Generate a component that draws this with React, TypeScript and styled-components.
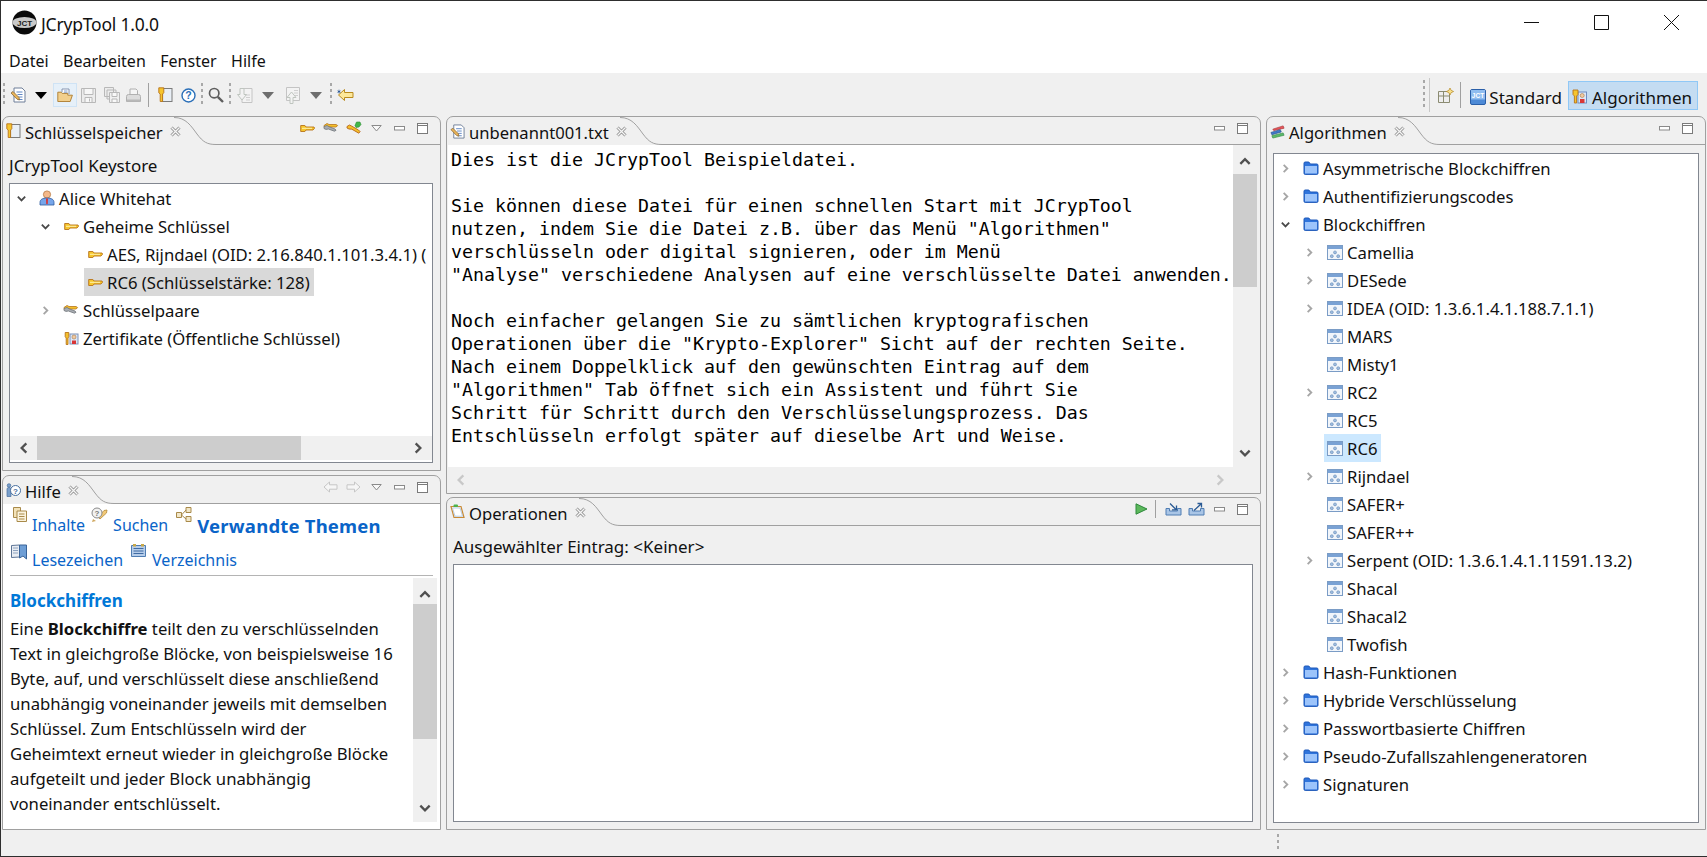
import React from "react";
import styled, { createGlobalStyle } from "styled-components";

const UI_FONT = `"Noto Sans", "Open Sans", sans-serif`;
const BORDER = "#a0a0a0";
const BG = "#f0f0f0";

const GlobalStyle = createGlobalStyle`
  html, body {
    margin: 0;
    padding: 0;
    background: ${BG};
  }
  * {
    box-sizing: border-box;
  }
`;

const Win = styled.div`
  width: 1707px;
  height: 857px;
  overflow: hidden;
  display: flex;
  flex-direction: column;
  background: ${BG};
  border-top: 1px solid #2e2e2e;
  border-left: 1px solid #2e2e2e;
  border-bottom: 1px solid #2e2e2e;
  font-family: ${UI_FONT};
  font-size: 17px;
  color: #111;
`;

const TitleBar = styled.div`
  height: 47px;
  flex: none;
  background: #fff;
  display: flex;
  align-items: center;
  padding: 0 0 4px 11px;
`;

const TitleText = styled.span`
  margin-left: 4px;
  font-size: 17.5px;
  letter-spacing: -0.2px;
  position: relative;
  top: 1px;
`;

const WinButtons = styled.div`
  margin-left: auto;
  display: flex;
  align-items: center;
  margin-right: 28px;
  gap: 55px;
  svg {
    display: block;
  }
`;

const MenuBar = styled.div`
  height: 25px;
  flex: none;
  background: #fff;
  display: flex;
  align-items: center;
  padding-left: 8px;
  gap: 14.5px;
  font-size: 16px;
`;

const Toolbar = styled.div`
  height: 43px;
  flex: none;
  display: flex;
  align-items: center;
  padding-top: 1px;
`;

const ToolSlot = styled.div<{ $w: number }>`
  flex: none;
  width: ${(p) => p.$w}px;
  height: 24px;
  display: flex;
  align-items: center;
  justify-content: center;
  svg {
    display: block;
    flex: none;
  }
`;

const ActiveSlot = styled(ToolSlot)`
  background: #e6f0f9;
  border: 1px solid #cfe3f5;
`;

const Handle = styled.div<{ $h?: number }>`
  flex: none;
  width: 2px;
  height: ${(p) => p.$h ?? 24}px;
  background-image: linear-gradient(#a8a8a8 50%, transparent 50%);
  background-size: 2px 6px;
`;

const VLine = styled.div<{ $h?: number }>`
  flex: none;
  width: 1px;
  height: ${(p) => p.$h ?? 24}px;
  background: #a0a0a0;
`;

const PerspectiveBar = styled.div`
  margin-left: auto;
  display: flex;
  align-items: center;
  height: 100%;
  padding-right: 9px;
  svg {
    display: block;
    flex: none;
  }
`;

const PerspectiveDivider = styled.div`
  width: 1px;
  height: 34px;
  background: #c8c8c8;
  margin: 0 8px 0 4px;
`;

const PerspectiveBtn = styled.div<{ $active?: boolean }>`
  display: flex;
  align-items: center;
  gap: ${(p) => (p.$active ? 5 : 3)}px;
  height: 29px;
  padding: 4px 5px 0 3px;
  font-size: 17px;
  border: 1px solid ${(p) => (p.$active ? "#90c8f6" : "transparent")};
  background: ${(p) => (p.$active ? "#c4dcf2" : "transparent")};
`;

const Workbench = styled.div`
  flex: none;
  height: 714px;
  display: flex;
  padding-left: 1px;
  gap: 5px;
`;

const Column = styled.div<{ $w: number; $gap: number }>`
  flex: none;
  width: ${(p) => p.$w}px;
  display: flex;
  flex-direction: column;
  gap: ${(p) => p.$gap}px;
`;

const PanelBox = styled.div<{ $h?: number }>`
  height: ${(p) => (p.$h ? `${p.$h}px` : "100%")};
  flex: none;
  display: flex;
  flex-direction: column;
  border: 1px solid ${BORDER};
  border-radius: 7px 7px 0 0;
  overflow: hidden;
`;

const PanelHead = styled.div`
  flex: none;
  height: 28px;
  display: flex;
`;

const Tab = styled.div`
  display: flex;
  align-items: center;
  height: 28px;
  padding-left: 3px;
  font-size: 16.6px;
  flex: none;
  span {
    margin: 3px 7px 0 4px;
    white-space: nowrap;
  }
  svg {
    display: block;
    flex: none;
  }
`;

const TabCurve = styled.svg`
  flex: none;
  margin-left: -7px;
  display: block;
`;

const HeadRest = styled.div`
  flex: 1;
  min-width: 0;
  border-bottom: 1px solid ${BORDER};
  display: flex;
  justify-content: flex-end;
  align-items: flex-start;
  padding: 1px 6px 0 0;
`;

const HeadTool = styled.div<{ $w?: number }>`
  flex: none;
  width: ${(p) => p.$w ?? 23}px;
  height: 20px;
  display: flex;
  align-items: center;
  justify-content: center;
  svg {
    display: block;
    flex: none;
  }
`;

const PanelBody = styled.div<{ $white?: boolean; $pad?: string }>`
  flex: 1;
  min-height: 0;
  display: flex;
  flex-direction: column;
  background: ${(p) => (p.$white ? "#fff" : BG)};
  padding: ${(p) => p.$pad ?? "0"};
`;

const Caption = styled.div`
  flex: none;
  height: 38px;
  padding-top: 3px;
  display: flex;
  align-items: center;
  font-size: 17px;
`;

const TreeFrame = styled.div`
  flex: 1;
  min-height: 0;
  border: 1px solid #828790;
  background: #fff;
  display: flex;
  flex-direction: column;
  overflow: hidden;
`;

const TreeList = styled.div`
  flex: 1;
  min-height: 0;
  overflow: hidden;
`;

const TreeRow = styled.div<{ $level: number }>`
  height: 28px;
  display: flex;
  align-items: center;
  padding-left: ${(p) => 3 + p.$level * 24}px;
  font-size: 16.7px;
  white-space: nowrap;
  svg {
    flex: none;
    display: block;
  }
`;

const Twisty = styled.div`
  flex: none;
  width: 17px;
  height: 28px;
  display: flex;
  align-items: center;
  justify-content: center;
`;

const TreeEntry = styled.div<{ $sel?: string }>`
  display: flex;
  align-items: center;
  height: 28px;
  margin-left: 6px;
  padding: 0 4px 0 3px;
  background: ${(p) => p.$sel ?? "transparent"};
`;

const TreeIcon = styled.div`
  flex: none;
  width: 16px;
  margin-right: 4px;
  display: flex;
  justify-content: center;
`;

const HScroll = styled.div<{ $h?: number; $right?: number }>`
  flex: none;
  height: ${(p) => p.$h ?? 24}px;
  background: ${BG};
  display: flex;
  align-items: center;
  justify-content: space-between;
  padding: 0 ${(p) => p.$right ?? 7}px 0 7px;
  position: relative;
  svg {
    display: block;
  }
`;

const HThumb = styled.div`
  position: absolute;
  left: 27px;
  top: 0;
  bottom: 0;
  width: 264px;
  background: #cdcdcd;
`;

const VScroll = styled.div`
  flex: none;
  width: 24px;
  background: ${BG};
  display: flex;
  flex-direction: column;
  justify-content: space-between;
  align-items: center;
  position: relative;
  padding: 9px 0 7px;
  svg {
    display: block;
  }
`;

const VThumb = styled.div<{ $top: number; $h: number }>`
  position: absolute;
  left: 0;
  right: 0;
  top: ${(p) => p.$top}px;
  height: ${(p) => p.$h}px;
  background: #cdcdcd;
`;

const HelpNav = styled.div`
  flex: none;
  height: 72px;
  margin: 0 7px;
  border-bottom: 1px solid #b4b4b4;
  color: #0a64c8;
`;

const NavRow = styled.div<{ $h: number }>`
  height: ${(p) => p.$h}px;
  display: flex;
  align-items: flex-start;
`;

const NavItem = styled.div<{ $pad: number; $gap: number }>`
  display: flex;
  align-items: flex-start;
  padding-left: ${(p) => p.$pad}px;
  gap: ${(p) => p.$gap}px;
  font-size: 16px;
  svg {
    display: block;
    margin-top: 3px;
  }
`;

const NavText = styled.span<{ $top: number }>`
  margin-top: ${(p) => p.$top}px;
`;

const NavStrong = styled.span`
  margin-top: 9px;
  font-size: 18.5px;
  font-weight: 700;
  letter-spacing: 0.2px;
`;

const HelpContent = styled.div`
  flex: 1;
  min-height: 0;
  display: flex;
  margin-top: 2px;
`;

const HelpText = styled.div`
  flex: 1;
  min-width: 0;
  padding: 10px 0 0 7px;
  font-size: 16.7px;
  line-height: 25px;
`;

const HelpHeading = styled.div`
  color: #0078d7;
  font-weight: 700;
  font-size: 17px;
  height: 28px;
`;

const HelpLine = styled.div`
  white-space: nowrap;
`;

const HelpFoot = styled.div`
  flex: none;
  height: 7px;
`;

const HelpScroll = styled(VScroll)`
  margin-right: 3px;
`;

const EditorArea = styled.div`
  flex: 1;
  min-height: 0;
  display: flex;
  padding-right: 3px;
  background: ${BG};
`;

const EditorText = styled.pre`
  flex: 1;
  min-width: 0;
  margin: 0 0 0 1px;
  background: #fff;
  padding: 3px 0 0 3px;
  font-family: "DejaVu Sans Mono", "Liberation Mono", monospace;
  font-size: 18.27px;
  line-height: 23px;
  color: #000;
  overflow: hidden;
`;

const OpsBox = styled.div`
  flex: 1;
  min-height: 0;
  border: 1px solid #828790;
  background: #fff;
`;

const StatusBar = styled.div`
  flex: 1;
  min-height: 0;
  display: flex;
  align-items: center;
  padding-left: 1276px;
`;

const Gap = styled.div<{ $h: number }>`
  flex: none;
  height: ${(p) => p.$h}px;
`;

// ---- icons ----

const Chevron = ({ dir, color = "#505050", size = 14 }: { dir: "u" | "d" | "l" | "r"; color?: string; size?: number }) => {
  const paths = { u: "M2 8.5 6 4.5 10 8.5", d: "M2 4 6 8 10 4", l: "M8 2 4 6 8 10", r: "M4 2 8 6 4 10" };
  return (
    <svg width={size} height={size} viewBox="0 0 12 12" fill="none">
      <path d={paths[dir]} stroke={color} strokeWidth={2} />
    </svg>
  );
};

const TreeDown = () => <Chevron dir="d" color="#4a4a4a" size={11} />;
const TreeRight = () => <Chevron dir="r" color="#a6a6a6" size={11} />;

const Logo = () => (
  <svg width="25" height="25" viewBox="0 0 25 25">
    <circle cx="12.5" cy="12.5" r="12" fill="#0a0a0a" />
    <ellipse cx="12.5" cy="12.5" rx="12" ry="5.5" fill="#c9c9c9" />
    <text x="12.5" y="15.5" fontSize="8" fontWeight="700" textAnchor="middle" fill="#222" fontFamily="Liberation Sans, sans-serif">
      JCT
    </text>
  </svg>
);

const KeyIcon = () => (
  <svg width="15" height="9" viewBox="0 0 15 9">
    <path d="M.7 1.5h4.2L6 3h8l.6 1.2L13 6H6L4.9 7.5H.7z" fill="#f6c62c" stroke="#b8731a" strokeWidth=".9" />
    <path d="M2 4.3h10" stroke="#fff2b0" />
  </svg>
);

const KeyPairIcon = () => (
  <svg width="16" height="13" viewBox="0 0 16 13">
    <path d="M1 3.5 4 1.5l2 1h7l1.6 1-1.4 1.5H6L4 6 1.5 5.8z" fill="#f3c02b" stroke="#b8731a" strokeWidth=".8" />
    <path d="M1 4.5 4 3.5l2 1.2 6 2.3 1 1.3-1.6.9-6-2.2-2.4.4L1 6.5z" fill="#a9adb3" stroke="#6f7378" strokeWidth=".8" />
  </svg>
);

const KeyPlusIcon = () => (
  <svg width="16" height="15" viewBox="0 0 16 15">
    <path d="M1 5.500 3.500 4l2 1 7 4 1.600 1.600-1.300 1.600-7-4L3 8 1 7z" fill="#f3c02b" stroke="#b8641a" strokeWidth=".9" />
    <path d="M9 4.500 10.500 1H14l1 2.500-2 2.500-3 .5z" fill="#43b649" stroke="#2f8f35" strokeWidth=".6" />
  </svg>
);

const CertIcon = () => (
  <svg width="15" height="15" viewBox="0 0 15 15">
    <rect x="6" y="3" width="8" height="10" fill="#dbe7f7" stroke="#7c92b8" />
    <circle cx="10" cy="6" r="2" fill="#f1c9a0" stroke="#a77b4a" strokeWidth=".6" />
    <path d="M8 13V9.500h4V13z" fill="#d93636" />
    <path d="M1.200 1.500h3.600v4.200L4 7v6.500H2.200V7L1.200 5.700z" fill="#f3c02b" stroke="#b8731a" strokeWidth=".9" />
  </svg>
);

const UserIcon = () => (
  <svg width="16" height="16" viewBox="0 0 16 16">
    <circle cx="8" cy="4.500" r="3.600" fill="#f4b98a" stroke="#b87a44" strokeWidth=".8" />
    <path d="M1 15v-2.500C1 9.500 3.500 8 8 8s7 1.500 7 4.500V15z" fill="#77a6ea" stroke="#2d5aa0" strokeWidth=".8" />
    <path d="M7 8.500h2L8.800 13.500 8 14.500 7.200 13.500z" fill="#d93636" />
  </svg>
);

const KeystoreIcon = () => (
  <svg width="15" height="16" viewBox="0 0 15 16">
    <rect x="4.500" y="1.500" width="9.500" height="13" fill="#e9eff6" stroke="#7b7b7b" />
    <path d="M.8.800h5v5L4.600 7v7.500H2.200V7L.8 5.800z" fill="#f5c52e" stroke="#b8731a" strokeWidth=".9" />
  </svg>
);

const FolderIcon = () => (
  <svg width="16" height="14" viewBox="0 0 16 14">
    <path d="M1 12.200V2.200Q1 1 2.200 1h3.600L7.400 3h6.400Q15 3 15 4.200v8q0 1.200-1.200 1.200H2.200Q1 13.400 1 12.200z" fill="#2f74dc" stroke="#1f58b8" strokeWidth="1" />
    <path d="M2 5h12v7.400H2z" fill="#9cc4fb" />
  </svg>
);

const AlgoIcon = () => (
  <svg width="16" height="15" viewBox="0 0 16 15">
    <rect x=".5" y=".5" width="15" height="14" fill="#f2f6fb" stroke="#7a9cc6" />
    <rect x="1" y="1" width="14" height="3" fill="#7aa2d4" />
    <circle cx="8" cy="7.400" r="1.500" fill="#9dbce0" stroke="#5c80ad" strokeWidth=".5" />
    <circle cx="4.800" cy="11.200" r="1.500" fill="#9dbce0" stroke="#5c80ad" strokeWidth=".5" />
    <circle cx="11.200" cy="11.200" r="1.500" fill="#9dbce0" stroke="#5c80ad" strokeWidth=".5" />
  </svg>
);

const FileEditIcon = ({ dim = 16 }: { dim?: number }) => (
  <svg width={dim} height={dim} viewBox="0 0 16 16">
    <path d="M4 1h8l3 3v11H4z" fill="#fff" stroke="#6f7f99" />
    <path d="M6.500 5h6M7.500 7.500h5M8 10h4.500M8 12.500h4.500" stroke="#5f86c4" />
    <path d="M1 6l2-1.500 6 6L9.500 13 7 12.200z" fill="#e9b458" stroke="#8a6a38" strokeWidth=".8" />
  </svg>
);

const Triangle = ({ color }: { color: string }) => (
  <svg width="12" height="7" viewBox="0 0 12 7">
    <path d="M0 0h12L6 7z" fill={color} />
  </svg>
);

const OpenFolderIcon = () => (
  <svg width="16" height="15" viewBox="0 0 16 15">
    <path d="M5 4V1h7v5" fill="#fff" stroke="#7b8ba8" strokeWidth=".9" />
    <path d="M7 3h3.500M7 4.800h3.500" stroke="#5f86c4" strokeWidth=".8" />
    <path d="M.8 13.500V4.200h3.400l1 1.200h5.600v1.800h4.600l-2.200 6.300z" fill="#f2cf8c" stroke="#ad7a2d" strokeWidth=".9" />
  </svg>
);

const SaveIcon = () => (
  <svg width="15" height="15" viewBox="0 0 15 15" fill="#ececec" stroke="#b8b8b8">
    <path d="M.5.500h14v14H.5z" />
    <path d="M3 .5h9v6H3zM4 14.500V9.500h7v5z" fill="#f7f7f7" />
    <path d="M8.500 10.500v3" />
  </svg>
);

const SaveAllIcon = () => (
  <svg width="16" height="16" viewBox="0 0 16 16" fill="#ececec" stroke="#b8b8b8">
    <path d="M.5.500h9v9h-9zM3 3h9v9H3z" />
    <path d="M5.500 5.500h10v10h-10z" fill="#f0f0f0" />
    <path d="M8 5.500h5v4H8zM8 15.500V12h5v3.500z" fill="#f9f9f9" />
  </svg>
);

const PrintIcon = () => (
  <svg width="15" height="15" viewBox="0 0 15 15">
    <path d="M4 1h6l1.500 1.500V7H4z" fill="#f5f5f5" stroke="#b0b0b0" />
    <path d="M.5 8.500Q.5 6.500 2.500 6.500h10q2 0 2 2v5h-14z" fill="#dcdcdc" stroke="#b0b0b0" />
    <path d="M1 11.500h13v2H1z" fill="#b8b8b8" />
  </svg>
);

const HelpCircleIcon = () => (
  <svg width="15" height="15" viewBox="0 0 15 15">
    <circle cx="7.500" cy="7.500" r="6.500" fill="#fff" stroke="#2a6fb8" strokeWidth="1.400" />
    <text x="7.500" y="11.300" fontSize="10.500" fontWeight="700" textAnchor="middle" fill="#2a6fb8" fontFamily="Liberation Sans, sans-serif">
      ?
    </text>
  </svg>
);

const SearchIcon = () => (
  <svg width="16" height="16" viewBox="0 0 16 16" fill="none" stroke="#5e5e5e">
    <circle cx="6.200" cy="6.200" r="4.700" strokeWidth="1.700" />
    <path d="M9.800 9.800 15 15" strokeWidth="2.400" />
  </svg>
);

const ImportIcon = () => (
  <svg width="16" height="17" viewBox="0 0 16 17">
    <path d="M5 1.500h10v14H5z" fill="#f3f3f3" stroke="#c4c4c4" />
    <path d="M8 8h5M9 10.500h4M9 13h4" stroke="#cfcfcf" />
    <path d="M3 1.500h4v6h2.500L5 13 .5 7.500H3z" fill="#f3f3f3" stroke="#bfc5bf" />
  </svg>
);

const ExportIcon = () => (
  <svg width="16" height="17" viewBox="0 0 16 17">
    <path d="M1.500.500h13v13h-13z" fill="#f3f3f3" stroke="#c4c4c4" />
    <path d="M9 3.500h4M9 6h4M9 8.500h4" stroke="#cfcfcf" />
    <path d="M5 16.500v-6H2L6.500 5 11 10.500H8v6z" fill="#f3f3f3" stroke="#bfc5bf" />
  </svg>
);

const BackStarIcon = () => (
  <svg width="18" height="14" viewBox="0 0 18 14">
    <path d="M2.500 7 8.500 1.500v3h8.500v5H8.500v3z" fill="#fde89a" stroke="#b98a1e" />
    <path d="M3 1 2.500 3 .8 2.200 2.200 3.500.8 4.800 2.500 4.200 3 6l.5-1.800 1.700.6L3.800 3.500l1.400-1.300-1.700.8z" fill="#2e5a96" />
  </svg>
);

const PerspectiveIcon = () => (
  <svg width="16" height="15" viewBox="0 0 16 15">
    <path d="M.5 3.500h11v11H.5z" fill="#eee" stroke="#8b8b72" />
    <path d="M.5 8h11M5.500 3.500v11" stroke="#8b8b72" />
    <path d="M12 0l1.100 2.300L15.600 3.500l-2.500 1.200L12 7l-1.100-2.300L8.400 3.500l2.500-1.200z" fill="#f9e08b" stroke="#b58a28" strokeWidth=".7" />
  </svg>
);

const JctIcon = () => (
  <svg width="16" height="16" viewBox="0 0 16 16">
    <rect x=".5" y=".5" width="15" height="15" rx="1.500" fill="#4d8ad6" stroke="#2a5fa8" />
    <path d="M1 1h14v9.500H1z" fill="#8fbdf0" />
    <text x="8" y="9" fontSize="6.500" fontWeight="700" textAnchor="middle" fill="#fff" fontFamily="Liberation Sans, sans-serif">
      JCT
    </text>
  </svg>
);

const AlgoPerspectiveIcon = () => (
  <svg width="15" height="16" viewBox="0 0 15 16">
    <rect x="6" y="3" width="8.500" height="11" fill="#dbe7f7" stroke="#6f8cc0" />
    <circle cx="10.200" cy="6.500" r="2" fill="#f1c9a0" stroke="#a77b4a" strokeWidth=".6" />
    <path d="M8 14v-4h4.500v4z" fill="#d93636" />
    <path d="M1 1h5v4.500L4.600 7v7H2.400V7L1 5.500z" fill="#f5c52e" stroke="#b8731a" strokeWidth=".9" />
  </svg>
);

const BooksIcon = () => (
  <svg width="15" height="15" viewBox="0 0 16 15">
    <path d="M3 5 14 1.500l1 2.500L4 6.500z" fill="#e8565a" stroke="#a83235" strokeWidth=".7" />
    <path d="M1 8.500 11 5.500l1 2.500L2 11z" fill="#3f79c8" stroke="#24518f" strokeWidth=".7" />
    <path d="M2 12 14 9l1 2.500L3 14.500z" fill="#5bbb6a" stroke="#358a44" strokeWidth=".7" />
  </svg>
);

const OpsIcon = () => (
  <svg width="15" height="16" viewBox="0 0 15 16">
    <path d="M1 2.500h10l3 11H4z" fill="#f6f6f4" stroke="#c88a36" strokeWidth="1.200" />
    <path d="M2.500 4h7.500l2.500 8.200H5z" fill="#fff" stroke="#8fb2d8" strokeWidth=".6" />
    <rect x="3.500" y=".5" width="4.500" height="2.500" rx="1" fill="#4ab44f" />
  </svg>
);

const PersonHelpIcon = () => (
  <svg width="15" height="15" viewBox="0 0 15 15">
    <circle cx="3" cy="2.500" r="1.800" fill="#7aa0cc" stroke="#486f9e" strokeWidth=".7" />
    <path d="M1 13.500V6q0-1.500 2-1.500T5 6v7.500z" fill="#7aa0cc" stroke="#486f9e" strokeWidth=".7" />
    <circle cx="9.500" cy="7.500" r="5" fill="#fff" stroke="#486f9e" />
    <text x="9.500" y="10.500" fontSize="8" fontWeight="700" textAnchor="middle" fill="#486f9e" fontFamily="Liberation Sans, sans-serif">
      ?
    </text>
  </svg>
);

const CloseMark = () => (
  <svg width="11" height="11" viewBox="0 0 11 11" fill="none">
    <path d="M1.500 1.500 9.500 9.500M9.500 1.500 1.500 9.500" stroke="#8e8e8e" strokeWidth="3" />
    <path d="M1.500 1.500 9.500 9.500M9.500 1.500 1.500 9.500" stroke="#f6f6f6" strokeWidth="1.300" />
  </svg>
);

const MenuDrop = () => (
  <svg width="11" height="7" viewBox="0 0 11 7" fill="#f8f8f8" stroke="#8a8a8a">
    <path d="M.8.500h9.400L5.500 6z" />
  </svg>
);

const MinIcon = () => (
  <svg width="11" height="5" viewBox="0 0 11 5">
    <rect x=".5" y=".5" width="10" height="3.500" fill="#fff" stroke="#8a8a8a" />
  </svg>
);

const MaxIcon = () => (
  <svg width="11" height="11" viewBox="0 0 11 11">
    <rect x=".5" y=".5" width="10" height="10" fill="#fff" stroke="#7a7a7a" />
    <path d="M1 2.500h9" stroke="#7a7a7a" />
  </svg>
);

const NavArrow = ({ back }: { back?: boolean }) => (
  <svg width="15" height="12" viewBox="0 0 15 12">
    <path d={back ? "M1 6 6.500 1v2.800H14v4.400H6.500V11z" : "M14 6 8.500 1v2.800H1v4.400h7.500V11z"} fill="#f6f6f6" stroke="#c6c6c6" />
  </svg>
);

const PlayIcon = () => (
  <svg width="13" height="12" viewBox="0 0 13 12">
    <path d="M1 .8 12 6 1 11.200z" fill="#5cb85c" stroke="#2f8a3c" />
  </svg>
);

const TrayIcon = ({ out }: { out?: boolean }) => (
  <svg width="17" height="14" viewBox="0 0 17 14" fill="none">
    <path d="M1 6.500h3.500V9h8V6.500H16V13H1z" fill="#a9c5e6" stroke="#4f7db3" />
    <path d={out ? "M6 8.500 13 2M9.500 1.500h4v4" : "M5 1.500l6 6M7 7.800h4.500V3.500"} stroke="#2a5a94" strokeWidth="1.300" />
  </svg>
);

const ContentsIcon = () => (
  <svg width="14" height="15" viewBox="0 0 14 15">
    <path d="M.5.500h7v10h-7z" fill="#f2e2b8" stroke="#a98a4a" />
    <path d="M4 4h9.500v10.500H4z" fill="#fbf4df" stroke="#a98a4a" />
    <path d="M6 7h5.500M6 9.500h5.500M6 12h5.500" stroke="#a98a4a" />
  </svg>
);

const SearchHelpIcon = () => (
  <svg width="17" height="16" viewBox="0 0 17 16">
    <path d="M7 10 13 3.500l3-.5-.5 3-6.500 6z" fill="#f3c976" stroke="#b38a3a" strokeWidth=".8" />
    <circle cx="6" cy="6" r="5" fill="#f2f2f2" stroke="#8a8a8a" />
    <text x="6" y="9" fontSize="8" fontWeight="700" textAnchor="middle" fill="#777" fontFamily="Liberation Sans, sans-serif">
      ?
    </text>
    <path d="M2 12 1 15l4-1z" fill="#d0a860" />
  </svg>
);

const RelatedIcon = () => (
  <svg width="16" height="15" viewBox="0 0 16 15" stroke="#a98a4a" fill="#f2e7c9">
    <path d="M.5 5.500h5v5h-5zM10 .5h5v5h-5zM10 9.500h5v5h-5z" />
    <path d="M5.500 8 10 3M5.500 8 10 12" fill="none" />
  </svg>
);

const BookmarkIcon = () => (
  <svg width="17" height="16" viewBox="0 0 17 16">
    <path d="M.5 1.500 8.500 1v12l-8 .5z" fill="#e9edf3" stroke="#5d7596" />
    <path d="M8.500 1h7v14L12 12l-3.500 2z" fill="#6f9fd6" stroke="#3a6499" />
    <path d="M2 4h5M2 6.500h5M2 9h5" stroke="#8ea3bf" />
  </svg>
);

const IndexIcon = () => (
  <svg width="15" height="13" viewBox="0 0 15 13">
    <path d="M.5 1.500h14v11H.5z" fill="#b6cdea" stroke="#4f7db3" />
    <path d="M2.500 4.500h10M2.500 7h10M2.500 9.500h10" stroke="#3f6ba3" />
    <path d="M2 0h3v2.500H2zM10 0h3v2.500h-3z" fill="#c8a848" />
  </svg>
);

// ---- data ----

type TreeItem = {
  level: number;
  arrow?: "open" | "closed";
  icon: React.ReactNode;
  label: string;
  sel?: string;
};

const keystoreTree: TreeItem[] = [
  { level: 0, arrow: "open", icon: <UserIcon />, label: "Alice Whitehat" },
  { level: 1, arrow: "open", icon: <KeyIcon />, label: "Geheime Schlüssel" },
  { level: 2, icon: <KeyIcon />, label: "AES, Rijndael (OID: 2.16.840.1.101.3.4.1) (" },
  { level: 2, icon: <KeyIcon />, label: "RC6 (Schlüsselstärke: 128)", sel: "#d9d9d9" },
  { level: 1, arrow: "closed", icon: <KeyPairIcon />, label: "Schlüsselpaare" },
  { level: 1, icon: <CertIcon />, label: "Zertifikate (Öffentliche Schlüssel)" },
];

const algoTree: TreeItem[] = [
  { level: 0, arrow: "closed", icon: <FolderIcon />, label: "Asymmetrische Blockchiffren" },
  { level: 0, arrow: "closed", icon: <FolderIcon />, label: "Authentifizierungscodes" },
  { level: 0, arrow: "open", icon: <FolderIcon />, label: "Blockchiffren" },
  { level: 1, arrow: "closed", icon: <AlgoIcon />, label: "Camellia" },
  { level: 1, arrow: "closed", icon: <AlgoIcon />, label: "DESede" },
  { level: 1, arrow: "closed", icon: <AlgoIcon />, label: "IDEA (OID: 1.3.6.1.4.1.188.7.1.1)" },
  { level: 1, icon: <AlgoIcon />, label: "MARS" },
  { level: 1, icon: <AlgoIcon />, label: "Misty1" },
  { level: 1, arrow: "closed", icon: <AlgoIcon />, label: "RC2" },
  { level: 1, icon: <AlgoIcon />, label: "RC5" },
  { level: 1, icon: <AlgoIcon />, label: "RC6", sel: "#cce8ff" },
  { level: 1, arrow: "closed", icon: <AlgoIcon />, label: "Rijndael" },
  { level: 1, icon: <AlgoIcon />, label: "SAFER+" },
  { level: 1, icon: <AlgoIcon />, label: "SAFER++" },
  { level: 1, arrow: "closed", icon: <AlgoIcon />, label: "Serpent (OID: 1.3.6.1.4.1.11591.13.2)" },
  { level: 1, icon: <AlgoIcon />, label: "Shacal" },
  { level: 1, icon: <AlgoIcon />, label: "Shacal2" },
  { level: 1, icon: <AlgoIcon />, label: "Twofish" },
  { level: 0, arrow: "closed", icon: <FolderIcon />, label: "Hash-Funktionen" },
  { level: 0, arrow: "closed", icon: <FolderIcon />, label: "Hybride Verschlüsselung" },
  { level: 0, arrow: "closed", icon: <FolderIcon />, label: "Passwortbasierte Chiffren" },
  { level: 0, arrow: "closed", icon: <FolderIcon />, label: "Pseudo-Zufallszahlengeneratoren" },
  { level: 0, arrow: "closed", icon: <FolderIcon />, label: "Signaturen" },
];

const editorText = `Dies ist die JCrypTool Beispieldatei.

Sie können diese Datei für einen schnellen Start mit JCrypTool
nutzen, indem Sie die Datei z.B. über das Menü "Algorithmen"
verschlüsseln oder digital signieren, oder im Menü
"Analyse" verschiedene Analysen auf eine verschlüsselte Datei anwenden.

Noch einfacher gelangen Sie zu sämtlichen kryptografischen
Operationen über die "Krypto-Explorer" Sicht auf der rechten Seite.
Nach einem Doppelklick auf den gewünschten Eintrag auf dem
"Algorithmen" Tab öffnet sich ein Assistent und führt Sie
Schritt für Schritt durch den Verschlüsselungsprozess. Das
Entschlüsseln erfolgt später auf dieselbe Art und Weise.`;

const helpLines = [
  "Text in gleichgroße Blöcke, von beispielsweise 16",
  "Byte, auf, und verschlüsselt diese anschließend",
  "unabhängig voneinander jeweils mit demselben",
  "Schlüssel.  Zum Entschlüsseln wird der",
  "Geheimtext erneut wieder in gleichgroße Blöcke",
  "aufgeteilt und jeder Block unabhängig",
  "voneinander entschlüsselt.",
];

// ---- parts ----

const Tree = ({ items }: { items: TreeItem[] }) => (
  <TreeList>
    {items.map((it) => (
      <TreeRow key={it.label} $level={it.level}>
        <Twisty>{it.arrow === "open" ? <TreeDown /> : it.arrow === "closed" ? <TreeRight /> : null}</Twisty>
        <TreeEntry $sel={it.sel}>
          <TreeIcon>{it.icon}</TreeIcon>
          {it.label}
        </TreeEntry>
      </TreeRow>
    ))}
  </TreeList>
);

const Panel = ({
  h,
  icon,
  title,
  tools,
  children,
}: {
  h?: number;
  icon: React.ReactNode;
  title: string;
  tools?: React.ReactNode;
  children: React.ReactNode;
}) => (
  <PanelBox $h={h}>
    <PanelHead>
      <Tab>
        {icon}
        <span>{title}</span>
        <CloseMark />
      </Tab>
      <TabCurve width="42" height="28" viewBox="0 0 42 28" fill="none">
        <path d="M0 .5C12 .5 17 9 23 17 29 25 33 27.5 42 27.5" stroke={BORDER} />
      </TabCurve>
      <HeadRest>
        {tools}
        <HeadTool>
          <MinIcon />
        </HeadTool>
        <HeadTool>
          <MaxIcon />
        </HeadTool>
      </HeadRest>
    </PanelHead>
    <PanelBody>{children}</PanelBody>
  </PanelBox>
);

const App = () => (
  <Win>
    <GlobalStyle />
    <TitleBar>
      <Logo />
      <TitleText>JCrypTool 1.0.0</TitleText>
      <WinButtons>
        <svg width="15" height="15" viewBox="0 0 15 15" stroke="#111" fill="none">
          <path d="M0 7.500h15" />
        </svg>
        <svg width="15" height="15" viewBox="0 0 15 15" stroke="#111" fill="none">
          <path d="M.5.500h14v14H.5z" />
        </svg>
        <svg width="15" height="15" viewBox="0 0 15 15" stroke="#111" fill="none">
          <path d="M0 0l15 15M15 0 0 15" />
        </svg>
      </WinButtons>
    </TitleBar>
    <MenuBar>
      <span>Datei</span>
      <span>Bearbeiten</span>
      <span>Fenster</span>
      <span>Hilfe</span>
    </MenuBar>
    <Toolbar>
      <ToolSlot $w={6}>
        <Handle />
      </ToolSlot>
      <ToolSlot $w={22}>
        <FileEditIcon />
      </ToolSlot>
      <ToolSlot $w={24}>
        <Triangle color="#000" />
      </ToolSlot>
      <ActiveSlot $w={24}>
        <OpenFolderIcon />
      </ActiveSlot>
      <ToolSlot $w={22}>
        <SaveIcon />
      </ToolSlot>
      <ToolSlot $w={26}>
        <SaveAllIcon />
      </ToolSlot>
      <ToolSlot $w={16}>
        <PrintIcon />
      </ToolSlot>
      <ToolSlot $w={14}>
        <VLine />
      </ToolSlot>
      <ToolSlot $w={20}>
        <KeystoreIcon />
      </ToolSlot>
      <ToolSlot $w={26}>
        <HelpCircleIcon />
      </ToolSlot>
      <ToolSlot $w={2}>
        <Handle />
      </ToolSlot>
      <ToolSlot $w={26}>
        <SearchIcon />
      </ToolSlot>
      <ToolSlot $w={2}>
        <Handle />
      </ToolSlot>
      <ToolSlot $w={28}>
        <ImportIcon />
      </ToolSlot>
      <ToolSlot $w={18}>
        <Triangle color="#6e6e6e" />
      </ToolSlot>
      <ToolSlot $w={32}>
        <ExportIcon />
      </ToolSlot>
      <ToolSlot $w={14}>
        <Triangle color="#6e6e6e" />
      </ToolSlot>
      <ToolSlot $w={16}>
        <Handle />
      </ToolSlot>
      <ToolSlot $w={12}>
        <BackStarIcon />
      </ToolSlot>
      <PerspectiveBar>
        <Handle $h={30} />
        <PerspectiveDivider />
        <PerspectiveIcon />
        <ToolSlot $w={12}>
          <VLine $h={26} />
        </ToolSlot>
        <PerspectiveBtn>
          <JctIcon />
          Standard
        </PerspectiveBtn>
        <PerspectiveBtn $active>
          <AlgoPerspectiveIcon />
          Algorithmen
        </PerspectiveBtn>
      </PerspectiveBar>
    </Toolbar>
    <Workbench>
      <Column $w={439} $gap={4}>
        <Panel
          h={355}
          icon={<KeystoreIcon />}
          title="Schlüsselspeicher"
          tools={
            <>
              <HeadTool>
                <KeyIcon />
              </HeadTool>
              <HeadTool>
                <KeyPairIcon />
              </HeadTool>
              <HeadTool>
                <KeyPlusIcon />
              </HeadTool>
              <HeadTool>
                <MenuDrop />
              </HeadTool>
            </>
          }
        >
          <PanelBody $pad="0 7px 7px 6px">
            <Caption>JCrypTool Keystore</Caption>
            <TreeFrame>
              <Tree items={keystoreTree} />
              <HScroll>
                <Chevron dir="l" />
                <HThumb />
                <Chevron dir="r" />
              </HScroll>
              <Gap $h={2} />
            </TreeFrame>
          </PanelBody>
        </Panel>
        <Panel
          h={355}
          icon={<PersonHelpIcon />}
          title="Hilfe"
          tools={
            <>
              <HeadTool>
                <NavArrow back />
              </HeadTool>
              <HeadTool>
                <NavArrow />
              </HeadTool>
              <HeadTool>
                <MenuDrop />
              </HeadTool>
            </>
          }
        >
          <PanelBody $white>
            <HelpNav>
              <NavRow $h={37}>
                <NavItem $pad={3} $gap={5}>
                  <ContentsIcon />
                  <NavText $top={10}>Inhalte</NavText>
                </NavItem>
                <NavItem $pad={6} $gap={5}>
                  <SearchHelpIcon />
                  <NavText $top={10}>Suchen</NavText>
                </NavItem>
                <NavItem $pad={8} $gap={5}>
                  <RelatedIcon />
                  <NavStrong>Verwandte Themen</NavStrong>
                </NavItem>
              </NavRow>
              <NavRow $h={34}>
                <NavItem $pad={1} $gap={4}>
                  <BookmarkIcon />
                  <NavText $top={8}>Lesezeichen</NavText>
                </NavItem>
                <NavItem $pad={8} $gap={6}>
                  <IndexIcon />
                  <NavText $top={8}>Verzeichnis</NavText>
                </NavItem>
              </NavRow>
            </HelpNav>
            <HelpContent>
              <HelpText>
                <HelpHeading>Blockchiffren</HelpHeading>
                <HelpLine>
                  Eine <b>Blockchiffre</b> teilt den zu verschlüsselnden
                </HelpLine>
                {helpLines.map((l) => (
                  <HelpLine key={l}>{l}</HelpLine>
                ))}
              </HelpText>
              <HelpScroll>
                <Chevron dir="u" />
                <VThumb $top={26} $h={135} />
                <Chevron dir="d" />
              </HelpScroll>
            </HelpContent>
            <HelpFoot />
          </PanelBody>
        </Panel>
      </Column>
      <Column $w={815} $gap={3}>
        <Panel h={378} icon={<FileEditIcon dim={15} />} title="unbenannt001.txt">
          <EditorArea>
            <EditorText>{editorText}</EditorText>
            <VScroll>
              <Chevron dir="u" />
              <VThumb $top={29} $h={113} />
              <Chevron dir="d" />
            </VScroll>
          </EditorArea>
          <HScroll $h={26} $right={33}>
            <Chevron dir="l" color="#c8c8c8" />
            <Chevron dir="r" color="#c8c8c8" />
          </HScroll>
        </Panel>
        <Panel
          h={333}
          icon={<OpsIcon />}
          title="Operationen"
          tools={
            <>
              <HeadTool $w={14}>
                <PlayIcon />
              </HeadTool>
              <HeadTool $w={14}>
                <VLine $h={18} />
              </HeadTool>
              <HeadTool>
                <TrayIcon />
              </HeadTool>
              <HeadTool>
                <TrayIcon out />
              </HeadTool>
            </>
          }
        >
          <PanelBody $pad="0 7px 7px 6px">
            <Caption>Ausgewählter Eintrag: &lt;Keiner&gt;</Caption>
            <OpsBox />
          </PanelBody>
        </Panel>
      </Column>
      <Column $w={440} $gap={0}>
        <Panel h={714} icon={<BooksIcon />} title="Algorithmen">
          <PanelBody $pad="8px 6px 6px 6px">
            <TreeFrame>
              <Tree items={algoTree} />
            </TreeFrame>
          </PanelBody>
        </Panel>
      </Column>
    </Workbench>
    <StatusBar>
      <Handle $h={18} />
    </StatusBar>
  </Win>
);

export default App;
